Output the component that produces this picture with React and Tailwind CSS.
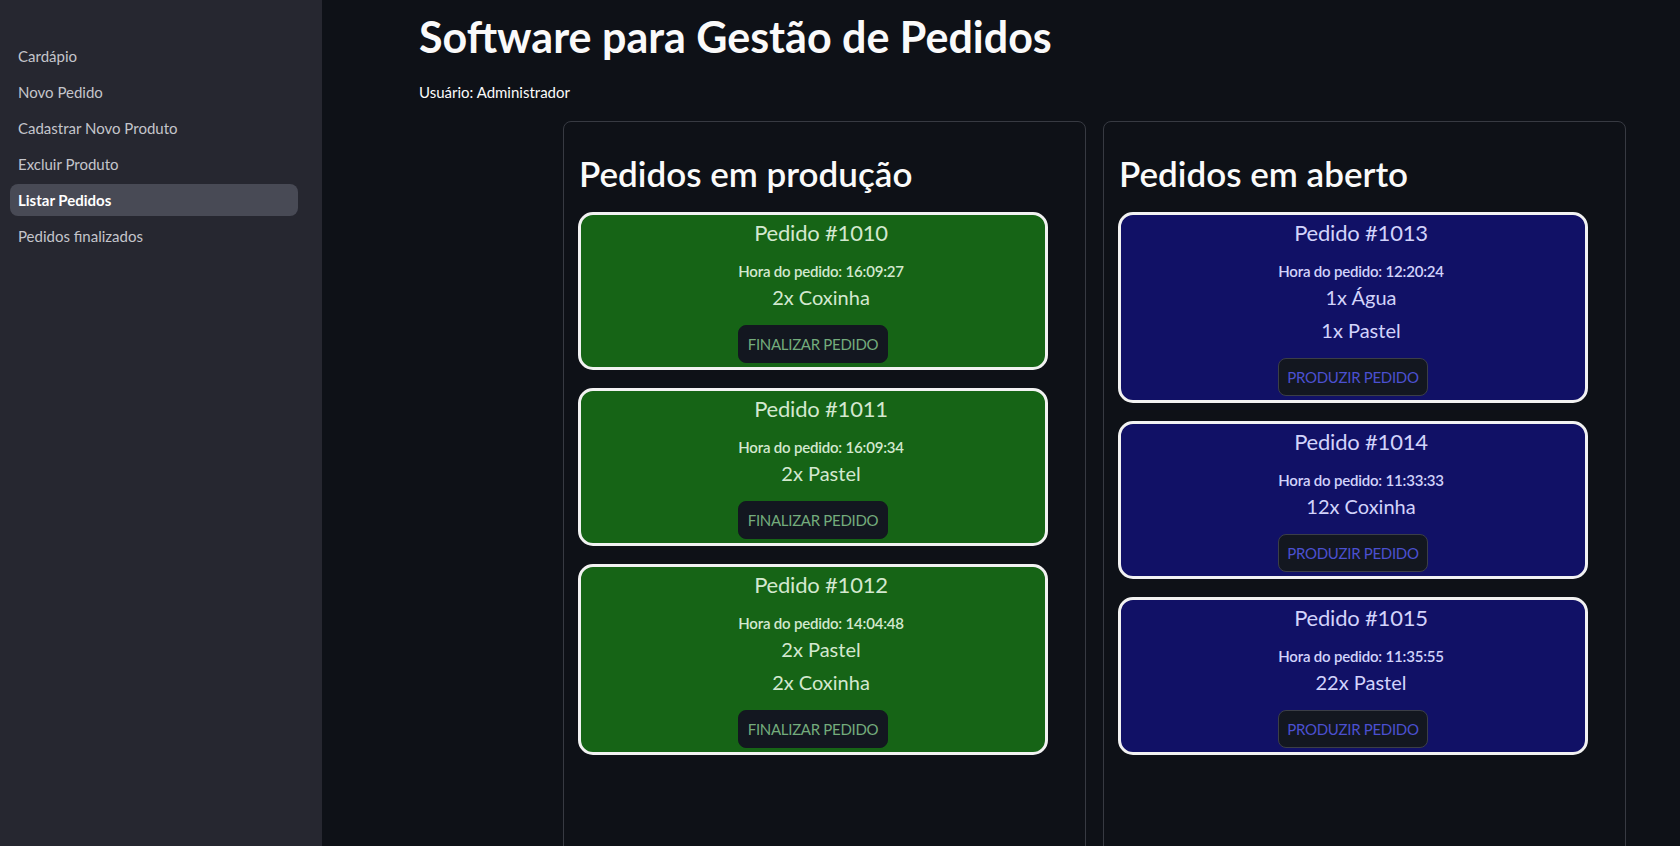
import React from 'react';

const navItems = [
  { label: 'Cardápio' },
  { label: 'Novo Pedido' },
  { label: 'Cadastrar Novo Produto' },
  { label: 'Excluir Produto' },
  { label: 'Listar Pedidos', active: true },
  { label: 'Pedidos finalizados' },
];

const emProducao = [
  { id: 1010, hora: '16:09:27', itens: ['2x Coxinha'] },
  { id: 1011, hora: '16:09:34', itens: ['2x Pastel'] },
  { id: 1012, hora: '14:04:48', itens: ['2x Pastel', '2x Coxinha'] },
];

const emAberto = [
  { id: 1013, hora: '12:20:24', itens: ['1x Água', '1x Pastel'] },
  { id: 1014, hora: '11:33:33', itens: ['12x Coxinha'] },
  { id: 1015, hora: '11:35:55', itens: ['22x Pastel'] },
];

function PedidoCard({ pedido, variant }) {
  const green = variant === 'green';
  return (
    <div
      className={`w-[470px] rounded-[15px] border-[3px] border-[#f2f2f2] pt-[3px] pb-[4px] flex flex-col items-center ${
        green ? 'bg-[#166416] text-[#d3e8cf]' : 'bg-[#111166] text-[#d2d3fb]'
      }`}
    >
      <div className="pl-[16px] text-[22px] leading-[30px] tracking-[-0.2px]">Pedido #{pedido.id}</div>
      <div className="pl-[16px] mt-[13px] text-[15px] leading-[20px] font-semibold tracking-[-0.2px]">
        Hora do pedido: {pedido.hora}
      </div>
      {pedido.itens.map((item) => (
        <div key={item} className="pl-[16px] text-[20px] leading-[33px]">
          {item}
        </div>
      ))}
      <button
        className={`mt-[11px] h-[38px] w-[150px] rounded-lg bg-[#131720] text-[15px] tracking-[-0.3px] ${
          green ? 'text-[#74ac7c] border border-[#131720]' : 'text-[#4b50d0] border border-[#3b3e47]'
        }`}
      >
        {green ? 'FINALIZAR PEDIDO' : 'PRODUZIR PEDIDO'}
      </button>
    </div>
  );
}

function Painel({ titulo, pedidos, variant }) {
  return (
    <div className="w-[523px] h-[760px] shrink-0 rounded-lg border border-[#373a42] pl-[14px] pt-[29px]">
      <h2 className="text-[35px] leading-[44px] font-semibold text-[#fafafa] pl-[1px]">{titulo}</h2>
      <div className="mt-[17px] flex flex-col gap-[18px]">
        {pedidos.map((p) => (
          <PedidoCard key={p.id} pedido={p} variant={variant} />
        ))}
      </div>
    </div>
  );
}

export default function App() {
  return (
    <div
      className="flex h-[846px] w-full overflow-hidden bg-[#0e1117] text-[#fafafa]"
      style={{ fontFamily: '"Source Sans Pro", Lato, "Noto Sans", sans-serif' }}
    >
      {/* Sidebar */}
      <aside className="w-[322px] shrink-0 bg-[#262730] pt-[40px] px-[10px]">
        <nav className="flex flex-col gap-[4px] w-[288px]">
          {navItems.map((item) => (
            <a
              key={item.label}
              href="#"
              className={`h-[32px] flex items-center pl-[8px] rounded-lg text-[15px] ${
                item.active ? 'bg-[#484a55] text-white font-bold' : 'text-[#c4c5cb]'
              }`}
            >
              {item.label}
            </a>
          ))}
        </nav>
      </aside>

      {/* Main */}
      <main className="flex-1 pl-[97px] pt-[11px]">
        <h1 className="text-[43px] leading-[52px] font-bold text-[#fafafa]">Software para Gestão de Pedidos</h1>
        <p className="mt-[17px] text-[15px] leading-[24px] text-[#fafafa]">Usuário: Administrador</p>
        <div className="mt-[17px] ml-[144px] flex gap-[17px]">
          <Painel titulo="Pedidos em produção" pedidos={emProducao} variant="green" />
          <Painel titulo="Pedidos em aberto" pedidos={emAberto} variant="blue" />
        </div>
      </main>
    </div>
  );
}
